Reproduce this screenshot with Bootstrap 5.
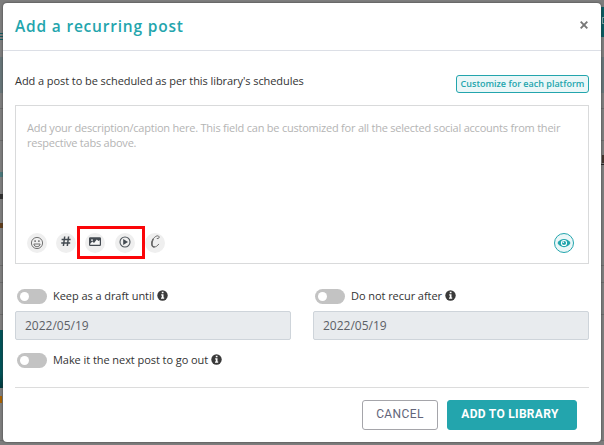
<!DOCTYPE html>
<html lang="en">
<head>
<meta charset="utf-8">
<meta name="viewport" content="width=device-width, initial-scale=1">
<title>Add a recurring post</title>
<link href="https://cdn.jsdelivr.net/npm/bootstrap@5.3.0/dist/css/bootstrap.min.css" rel="stylesheet">
<style>
:root{--teal:#23a5ad}
body{width:604px;height:445px;margin:0;background:#7d7d7d;font-family:"Open Sans",sans-serif;font-size:11px;line-height:15px;color:#333}
.page-under{position:absolute;inset:0;z-index:0;overflow:hidden}
.page-under span{position:absolute;display:block}
.band{left:0;right:0;height:36px;top:57px;background:#667478}
.rule{left:0;right:0;height:1px;background:#6b6b6b}
.dialog{z-index:1;width:598px;height:439px;margin:3px 0 0 3px;border:0;border-radius:4px;background:#fff;color:#333;box-shadow:0 0 2px #333}
.dialog-head{height:48px;padding:0 12px 1px;border-bottom:1px solid #dcdfe6}
.dialog-title{font-size:15.5px;font-weight:600;letter-spacing:.8px;line-height:20px;color:var(--teal)}
.dialog-body{padding:0 12px}
.intro{height:54px}
.intro-text{margin-top:22px;letter-spacing:-.07px}
.chip{flex:none;margin-top:24px;border:1px solid var(--teal);background:#ebf7f8;color:var(--teal);border-radius:3px;font-size:9px;font-weight:600;line-height:16px;height:18px;width:133px;white-space:nowrap;text-align:center}
.editor{height:159px;border:1px solid #d9dadb;padding:14px 11px 10px}
.hint{color:#b4b4b4;white-space:nowrap;letter-spacing:-.225px}
.tool{width:20px;height:20px;border-radius:50%;background:#efefef;display:flex;align-items:center;justify-content:center;flex:none}
.tool svg,.eye svg{display:block}
.marked{border:3px solid #fb0508;width:68px;height:33px;gap:10px;margin:-2px 0 0 1px;padding:1px 0 0 5px}
.eye{width:20px;height:20px;margin-right:3px;border:1px solid var(--teal);border-radius:50%;background:#ebf7f8}
.switch-row{height:15px;padding-left:2px}
.switch-row svg{margin-left:3px;position:relative;top:-1px}
.switch-text{margin-left:6px;letter-spacing:-.06px;position:relative;top:-1px}
.toggle{width:30px;height:15px;border-radius:8px;background:#c3c3c3;padding:3px}
.toggle::before{content:"";display:block;width:9px;height:9px;border-radius:50%;background:#fff}
.date-field{height:29px;margin-top:7px;border:1px solid #ced4da;border-radius:2px;background:#e8ebee;color:#5c6066;font-size:12px;line-height:27px;padding:0 9px}
.dialog-foot{margin-top:19px;border-top:1px solid #dcdcdc;padding:12px 12px 0 0;gap:9px}
.act{height:30px;border-radius:3px;font-family:Roboto,sans-serif;font-size:12px;line-height:26px;padding:0 0 2px;letter-spacing:.4px}
.act-cancel{width:76px;border:1px solid #a5a5aa;color:#62657a;background:#fff}
.act-add{width:130px;border-color:var(--teal);background:var(--teal);color:#fff;font-weight:700;letter-spacing:.3px;padding-right:4px}
</style>
<script src="https://cdn.jsdelivr.net/npm/bootstrap@5.3.0/dist/js/bootstrap.bundle.min.js"></script>
</head>
<body class="overflow-hidden">
<div class="page-under" aria-hidden="true">
  <span class="band"></span>
  <span style="left:598px;top:7px;width:6px;height:30px;background:#095a60"></span>
  <span style="left:0;top:33px;width:3px;height:7px;background:repeating-linear-gradient(#125b60 0 1px,#7d7d7d 1px 3px)"></span>
  <span class="rule" style="top:108px"></span><span class="rule" style="top:140px"></span>
  <span class="rule" style="top:265px"></span><span class="rule" style="top:282px"></span>
  <span class="rule" style="top:314px"></span><span class="rule" style="top:440px"></span>
  <span style="left:0;top:330px;width:3px;height:58px;background:linear-gradient(#005257 75%,#00383c)"></span>
  <span style="left:0;top:396px;width:2px;height:7px;background:#a76100"></span>
  <span style="left:0;top:172px;width:3px;height:5px;background:#4a787b"></span>
  <span style="left:0;top:194px;width:3px;height:5px;background:#303030"></span>
  <span style="left:0;top:223px;width:3px;height:5px;background:#5f3d1c"></span>
  <span style="left:602px;top:155px;width:2px;height:8px;background:#40332c"></span>
  <span style="left:601px;top:164px;width:3px;height:1px;background:#222"></span>
  <span style="left:602px;top:17px;width:2px;height:7px;border:1px solid #7d9ea0;border-right:0"></span>
</div>
<div class="modal-content dialog">
  <div class="dialog-head d-flex justify-content-between align-items-center">
    <h1 class="dialog-title mb-0">Add a recurring post</h1>
    <svg width="10" height="10" viewBox="0 0 10 10" role="img" aria-label="Close" stroke="#777" stroke-width="1.9"><path d="M1.7 .7 8.3 7.3M8.3 .7 1.7 7.3"/></svg>
  </div>
  <div class="dialog-body d-flex flex-column">
    <div class="intro d-flex justify-content-between">
      <div class="intro-text">Add a post to be scheduled as per this library's schedules</div>
      <div class="chip">Customize for each platform</div>
    </div>
    <div class="editor d-flex flex-column justify-content-between">
      <div class="hint">Add your description/caption here. This field can be customized for all the selected social accounts from their<br>respective tabs above.</div>
      <div class="d-flex align-items-center" style="height:20px">
        <span class="tool"><svg width="14" height="14" viewBox="0 0 14 14" fill="none" stroke="#666" stroke-width=".9" style="margin-top:-1px"><circle cx="7" cy="7" r="5.6"/><path d="M3.8 8Q4.3 10.8 7 10.8T10.2 8Z"/><path d="M5.1 4.2v1.9M8.9 4.2v1.9" stroke-width="1.3"/></svg></span>
        <span class="tool" style="margin-left:9px"><svg width="10" height="11" viewBox="0 0 10 11" fill="none" stroke="#444b52" stroke-width="1.5" style="margin-top:-3px"><path d="M3.7.5 2.4 10M7.6.5 6.3 10M.6 3.5h9M.2 7.1h9"/></svg></span>
        <span class="marked d-flex align-items-center">
          <span class="tool"><svg width="12" height="9" viewBox="0 0 12 9" style="margin-top:-3px"><rect x=".6" y=".8" width="10.8" height="7.6" rx=".6" fill="#f7f7f7" stroke="#444b52" stroke-width="1.2"/><path d="M.8 1h10.4v2L9.4 4 7.8 2.5 5 6 3.4 4.6.8 7Z" fill="#444b52"/><circle cx="3" cy="3.1" r=".9" fill="#fff"/></svg></span>
          <span class="tool"><svg width="12" height="12" viewBox="0 0 12 12" style="margin-top:-2px"><circle cx="6" cy="6" r="5" fill="none" stroke="#50575d" stroke-width="1.1"/><path d="M4.2 3.1 9 6 4.2 8.9Z" fill="#444b52"/></svg></span>
        </span>
        <span class="tool"><svg width="11" height="13" viewBox="0 0 11 13" fill="none" stroke="#666" stroke-width="1" stroke-linecap="round" style="margin-top:-3px"><path d="M7.200 3.600C8.500 3.900 9.600 2.700 9 1.600 8-.1 4.700 1.200 3 4.400 1.300 7.600 1.300 11.600 4 11.900 5.800 12.100 7.600 10.900 8.600 9.300"/><path d="M3 4.400C1.300 7.600 1.300 11.600 4 11.900" stroke-width="1.500"/></svg></span>
        <span class="eye ms-auto d-flex align-items-center justify-content-center"><svg width="14" height="10" viewBox="0 0 14 10"><path d="M.5 5C3-.5 11-.5 13.5 5 11 10.500 3 10.500.5 5Z" fill="#23a5ad"/><circle cx="7" cy="5" r="3.100" fill="#fff"/><circle cx="7" cy="5" r="2.100" fill="#23a5ad"/><circle cx="6.300" cy="4.200" r=".8" fill="#fff"/></svg></span>
      </div>
    </div>
    <div class="d-flex" style="gap:22px;margin-top:25px">
      <div style="width:276px">
        <div class="switch-row d-flex align-items-center"><span class="toggle"></span><span class="switch-text">Keep as a draft until</span><svg width="11" height="11" viewBox="0 0 11 11"><circle cx="5.500" cy="5.500" r="5.200" fill="#3a3a3a"/><path d="M4.800 1.700h1.700v1.500H4.800ZM4.200 4.200h2.300v3.300h.7v1.200H4V7.500h.8V5.400h-.6Z" fill="#fff"/></svg></div>
        <div class="date-field">2022/05/19</div>
      </div>
      <div style="width:276px">
        <div class="switch-row d-flex align-items-center"><span class="toggle"></span><span class="switch-text">Do not recur after</span><svg width="11" height="11" viewBox="0 0 11 11"><circle cx="5.500" cy="5.500" r="5.200" fill="#3a3a3a"/><path d="M4.800 1.700h1.700v1.500H4.800ZM4.200 4.200h2.300v3.300h.7v1.200H4V7.500h.8V5.400h-.6Z" fill="#fff"/></svg></div>
        <div class="date-field">2022/05/19</div>
      </div>
    </div>
    <div class="switch-row d-flex align-items-center" style="margin-top:13px"><span class="toggle"></span><span class="switch-text">Make it the next post to go out</span><svg width="11" height="11" viewBox="0 0 11 11"><circle cx="5.500" cy="5.500" r="5.200" fill="#3a3a3a"/><path d="M4.800 1.700h1.700v1.500H4.800ZM4.200 4.200h2.300v3.300h.7v1.200H4V7.500h.8V5.400h-.6Z" fill="#fff"/></svg></div>
    <div class="dialog-foot d-flex justify-content-end">
      <button type="button" class="btn act act-cancel">CANCEL</button>
      <button type="button" class="btn act act-add">ADD TO LIBRARY</button>
    </div>
  </div>
</div>
</body>
</html>
